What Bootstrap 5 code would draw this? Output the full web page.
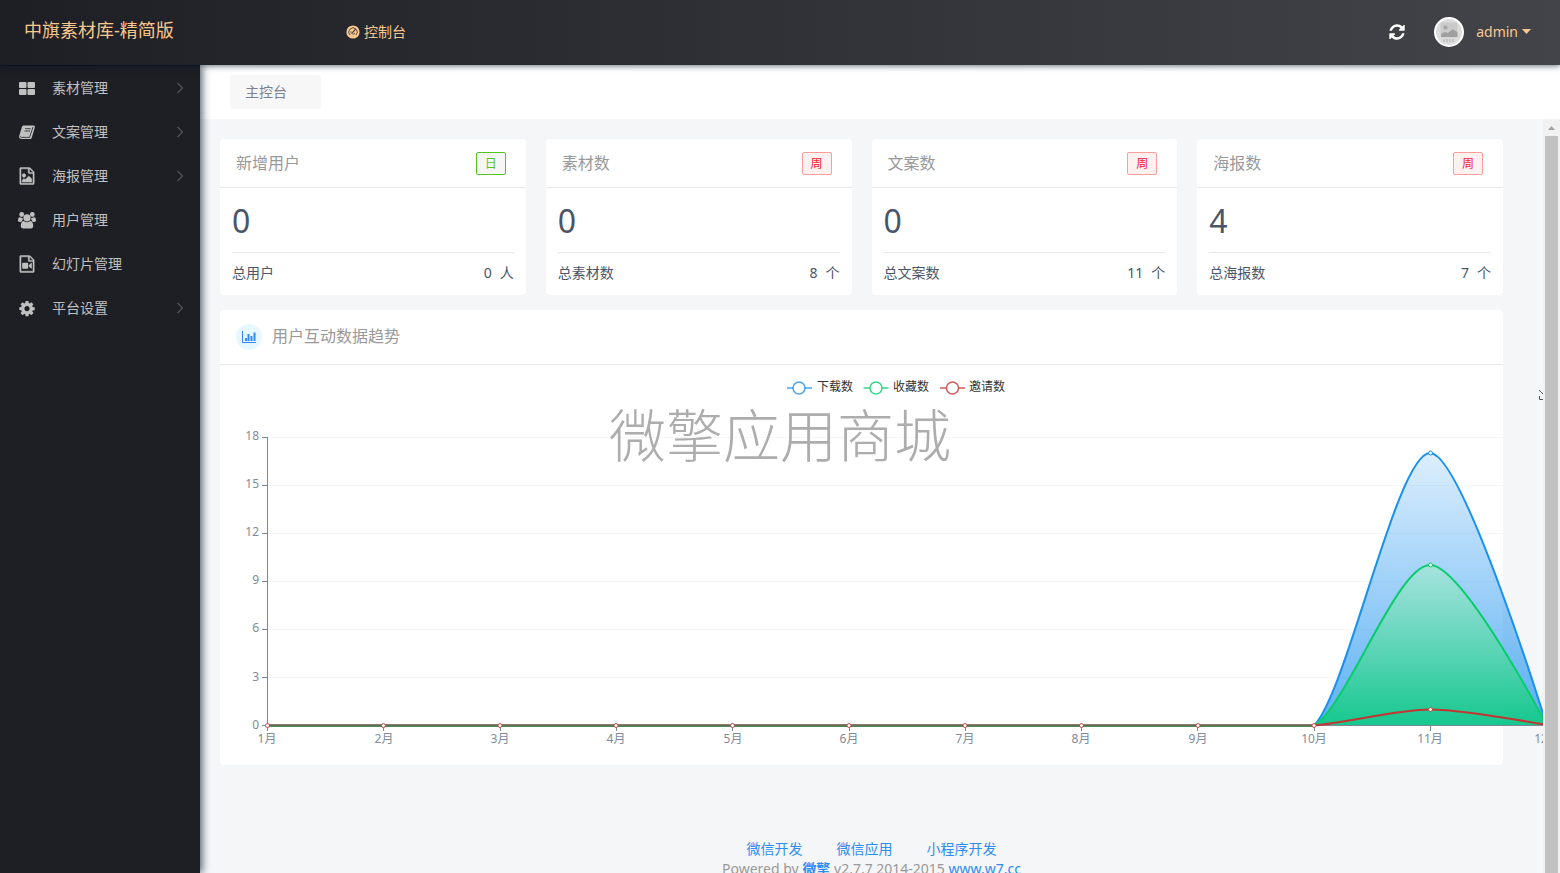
<!DOCTYPE html>
<html lang="zh-CN">
<head>
<meta charset="utf-8">
<meta name="viewport" content="width=device-width, initial-scale=1">
<title>中旗素材库-精简版</title>
<link href="https://cdn.jsdelivr.net/npm/bootstrap@5.3.0/dist/css/bootstrap.min.css" rel="stylesheet">
<style>
  body { font-family: "Noto Sans", "Noto Sans CJK SC", sans-serif; font-size: 14px; line-height: 20px; color: #4a5568; background: #f5f6f8; }
  a { text-decoration: none; }
  .topbar { height: 65px; padding: 0 25px 2px 24px; background: linear-gradient(90deg, #1e1f24, #43444a); box-shadow: 0 1px 6px rgba(0, 21, 41, .6); z-index: 3; }
  .topbar, .topbar a { color: #f8c88f; }
  .brand-link { font-size: 18px; width: 322px; padding: 0 0 4px; }
  .avatar { width: 30px; height: 30px; }
  .side { width: 200px; background: #1e1f24; border-top: 1px solid #10141c; box-shadow: 2px 0 8px rgba(0, 21, 41, .7); z-index: 2; }
  .side a { height: 44px; color: #c0c0c0; padding: 0 16px 0 18px; }
  .side .ico { width: 18px; height: 18px; fill: #c0c0c0; margin-right: 16px; }
  .chev { width: 8px; height: 12px; stroke: #77787c; fill: none; }
  .tabs { height: 54px; background: #fff; padding: 10px 30px; }
  .tabs a { width: 91px; height: 34px; padding: 0 15px; border-radius: 3px; background: #f7f7f7; color: #7b8095; }
  .content-pane { padding: 20px 40px 0 20px; }
  .panel-box { background: #fff; border-radius: 4px; }
  .stat-grid { gap: 20px; margin-bottom: 15px; }
  .box-title { font-size: 16px; font-weight: 400; color: #999; margin: 0; }
  .stat-head { height: 49px; padding: 1px 20px 0 16px; border-bottom: 1px solid #e8e8e8; }
  .tag { width: 30px; height: 23px; font-size: 12px; border: 1px solid #ff9d9a; border-radius: 2px; background: #fff1f0; color: #f5222d; }
  .tag-day { border-color: #52c41a; background: #f6f6f6; color: #52c41a; }
  .stat-body { padding: 0 12px 2px; }
  .stat-num { font-size: 32px; height: 65px; padding-top: 2px; border-bottom: 1px solid #e8e8e8; }
  .stat-foot { height: 40px; }
  .chart-head { height: 55px; padding: 0 16px; gap: 10px; border-bottom: 1px solid #e8e8e8; }
  .round-ico { width: 26px; height: 26px; border-radius: 50%; background: #e6f7ff; }
  .chart-wrap { padding-left: 15px; }
  .chart { display: block; width: calc(100% + 55px); height: auto; overflow: visible; font-size: 12px; }
  .foot { margin: 74px -20px 0 0; color: #999; }
  .foot a { color: #2d8cf0; }
  .foot-links { gap: 34px; }
  .scroll-track { width: 17px; background: #f1f1f1; padding: 0 2px; gap: 6px; }
  .scroll-track i { background: #c1c1c1; }
  .scroll-track svg { width: 7px; height: 4px; margin: 7px auto 0; }
  .watermark { font-size: 57px; line-height: 56px; padding-bottom: 4px; font-weight: 300; color: #adadad; z-index: 5; pointer-events: none; }
</style>
</head>
<body class="vh-100 overflow-hidden d-flex flex-column">

<header class="topbar d-flex align-items-center flex-shrink-0 position-relative">
  <a href="#" class="brand-link">中旗素材库-精简版</a>
  <a href="#" class="d-flex align-items-center gap-1">
    <svg width="14" height="14" viewBox="0 0 14 14"><circle cx="7" cy="7" r="6.6" fill="#f8c88f"/><path d="M4 10a4.2 4.2 0 1 1 6 0M4.800 6.300A2.600 2.600 0 0 0 9 8.500" fill="none" stroke="#4a3f38" stroke-width=".9"/><path d="M6.300 7.900 9.800 3.800" stroke="#4a3f38" stroke-width="1.100"/></svg>
    <span>控制台</span>
  </a>
  <button type="button" class="btn p-0 border-0 ms-auto me-4 d-flex" aria-label="刷新">
    <svg width="18" height="18" viewBox="0 0 1792 1792" fill="#fff"><path d="M1639 1056q0 5-1 7-64 268-268 434.500t-478 166.500q-146 0-282.500-55t-243.500-157l-129 129q-19 19-45 19t-45-19-19-45v-448q0-26 19-45t45-19h448q26 0 45 19t19 45-19 45l-137 137q71 66 161 102t187 36q134 0 250-65t186-179q11-17 53-117 8-23 30-23h192q13 0 22.500 9.500t9.500 22.500zm25-800v448q0 26-19 45t-45 19h-448q-26 0-45-19t-19-45 19-45l138-138q-148-137-349-137-134 0-250 65t-186 179q-11 17-53 117-8 23-30 23h-199q-13 0-22.500-9.500t-9.500-22.500v-7q65-268 270-434.500t480-166.500q146 0 284 55.500t245 156.500l130-129q19-19 45-19t45 19 19 45z"/></svg>
  </button>
  <a href="#" class="d-flex align-items-center ms-1">
    <svg class="avatar me-2" viewBox="0 0 30 30"><circle cx="15" cy="15" r="14" fill="#dcdcdc" stroke="#fff" stroke-width="2"/><rect x="6.500" y="5.500" width="17" height="15" rx="2" fill="#cacaca"/><circle cx="11.500" cy="10.500" r="2" fill="#a2a2a2"/><path d="M7 20v-3l4-2 3 1 5-4 4.500 3.500V20z" fill="#a0a0a0"/><path d="M9 23.500h12" stroke="#c4c4c4" stroke-width="3" stroke-dasharray="2 1"/></svg>
    <span class="ps-1 pe-1">admin</span>
    <svg width="9" height="5" viewBox="0 0 9 5" class="me-1"><path d="M0 0h9L4.500 5z" fill="#f8c88f"/></svg>
  </a>
</header>

<div class="d-flex flex-grow-1 overflow-hidden">
  <nav class="side flex-shrink-0 d-flex flex-column position-relative">
    <a href="#" class="d-flex align-items-center">
      <svg class="ico" viewBox="0 0 18 18"><rect x="1" y="3" width="7.500" height="6" rx="1"/><rect x="9.500" y="3" width="7.500" height="6" rx="1"/><rect x="1" y="10" width="7.500" height="6" rx="1"/><rect x="9.500" y="10" width="7.500" height="6" rx="1"/></svg>
      <span>素材管理</span><svg class="chev ms-auto" viewBox="0 0 8 12"><path d="M1.500 1 6.500 6 1.500 11"/></svg></a>
    <a href="#" class="d-flex align-items-center">
      <svg class="ico" viewBox="0 0 18 18"><path d="M6.200 2.500h9.300c1.200 0 1.600.9 1.300 1.900l-3 10c-.3 1-1 1.500-2 1.500H3.600c-1.600 0-3-1.200-2.500-2.700L4 3.800c.3-.8 1.200-1.300 2.200-1.300z"/><path d="M7.200 5.700h5.500M6.500 8H12M2.400 13.200c-.1.700.5 1.200 1.200 1.200h7.900L15 4" fill="none" stroke="#1e1f24" stroke-width=".8"/></svg>
      <span>文案管理</span><svg class="chev ms-auto" viewBox="0 0 8 12"><path d="M1.500 1 6.500 6 1.500 11"/></svg></a>
    <a href="#" class="d-flex align-items-center">
      <svg class="ico" viewBox="0 -64 1792 1920"><path d="M1596 380q28 28 48 76t20 88v1152q0 40-28 68t-68 28h-1344q-40 0-68-28t-28-68v-1600q0-40 28-68t68-28h896q40 0 88 20t76 48zm-444-244v376h376q-10-29-22-41l-313-313q-12-12-41-22zm384 1528v-1024h-416q-40 0-68-28t-28-68v-416h-768v1536h1280zm-128-448v320h-1024v-192l192-192 128 128 384-384zm-832-192q-80 0-136-56t-56-136 56-136 136-56 136 56 56 136-56 136-136 56z" stroke="#c0c0c0" stroke-width="50"/></svg>
      <span>海报管理</span><svg class="chev ms-auto" viewBox="0 0 8 12"><path d="M1.500 1 6.500 6 1.500 11"/></svg></a>
    <a href="#" class="d-flex align-items-center">
      <svg class="ico" viewBox="0 0 18 18"><circle cx="3.700" cy="3.500" r="2.400"/><circle cx="14.300" cy="3.500" r="2.400"/><path d="M5 7.500c-1.500-.6-2.500-1.300-3.500-1.300C.5 6.200 0 8 0 9.600c0 .9.700 1.400 1.600 1.400h1.800c.4-1.300 1-2.400 2-3zM13 7.500c1.500-.6 2.500-1.300 3.500-1.300 1 0 1.500 1.800 1.500 3.400 0 .9-.7 1.400-1.600 1.400h-1.800c-.4-1.300-1-2.400-2-3z"/><path d="M5.800 10c-2 0-3 2-3 5 0 1.500 1 2.400 2.300 2.400h7.800c1.300 0 2.300-.9 2.300-2.400 0-3-1-5-3-5-1 .8-2 1.200-3.200 1.200S6.800 10.800 5.800 10z"/><circle cx="9" cy="6.800" r="3.600"/></svg>
      <span>用户管理</span></a>
    <a href="#" class="d-flex align-items-center">
      <svg class="ico" viewBox="0 -64 1792 1920"><g stroke="#c0c0c0" stroke-width="50"><path d="M1596 380q28 28 48 76t20 88v1152q0 40-28 68t-68 28h-1344q-40 0-68-28t-28-68v-1600q0-40 28-68t68-28h896q40 0 88 20t76 48zm-444-244v376h376q-10-29-22-41l-313-313q-12-12-41-22zm384 1528v-1024h-416q-40 0-68-28t-28-68v-416h-768v1536h1280z"/></g><rect x="384" y="768" width="640" height="640" rx="110"/><path d="M1060 1060 1330 800q78-20 78 50v476q0 70-78 50L1060 1116z"/></svg>
      <span>幻灯片管理</span></a>
    <a href="#" class="d-flex align-items-center">
      <svg class="ico" viewBox="0 -64 1792 1792"><path d="M1152 896q0-106-75-181t-181-75-181 75-75 181 75 181 181 75 181-75 75-181zm512-109v222q0 12-8 23t-20 13l-185 28q-19 54-39 91 35 50 107 138 10 12 10 25t-9 23q-27 37-99 108t-94 71q-12 0-26-9l-138-108q-44 23-91 38-16 136-29 186-7 28-36 28h-222q-14 0-24.500-8.500t-11.500-21.500l-28-184q-49-16-90-37l-141 107q-10 9-25 9-14 0-25-11-126-114-165-168-7-10-7-23 0-12 8-23 15-21 51-66.500t54-70.500q-27-50-41-99l-183-27q-13-2-21-12.500t-8-23.500v-222q0-12 8-23t19-13l186-28q14-46 39-92-40-57-107-138-10-12-10-24 0-10 9-23 26-36 98.500-107.500t94.500-71.500q13 0 26 10l138 107q44-23 91-38 16-136 29-186 7-28 36-28h222q14 0 24.500 8.500t11.500 21.500l28 184q49 16 90 37l142-107q9-9 24-9 13 0 25 10 129 119 165 170 7 8 7 22 0 12-8 23-15 21-51 66.500t-54 70.500q26 50 41 98l183 28q13 2 21 12.500t8 23.500z"/></svg>
      <span>平台设置</span><svg class="chev ms-auto" viewBox="0 0 8 12"><path d="M1.500 1 6.500 6 1.500 11"/></svg></a>
  </nav>

  <div class="flex-grow-1 d-flex flex-column overflow-hidden">
    <div class="tabs flex-shrink-0"><a href="#" class="d-flex align-items-center">主控台</a></div>

    <div class="d-flex flex-grow-1 overflow-hidden">
      <main class="content-pane flex-grow-1 overflow-hidden">
        <div class="stat-grid d-flex">
          <section class="panel-box flex-fill w-25">
            <div class="stat-head d-flex align-items-center justify-content-between"><h2 class="box-title">新增用户</h2><span class="tag tag-day d-flex align-items-center justify-content-center">日</span></div>
            <div class="stat-body"><div class="stat-num d-flex align-items-center">0</div><div class="stat-foot d-flex align-items-center"><span class="me-auto">总用户</span><span class="me-2">0</span><span>人</span></div></div>
          </section>
          <section class="panel-box flex-fill w-25">
            <div class="stat-head d-flex align-items-center justify-content-between"><h2 class="box-title">素材数</h2><span class="tag d-flex align-items-center justify-content-center">周</span></div>
            <div class="stat-body"><div class="stat-num d-flex align-items-center">0</div><div class="stat-foot d-flex align-items-center"><span class="me-auto">总素材数</span><span class="me-2">8</span><span>个</span></div></div>
          </section>
          <section class="panel-box flex-fill w-25">
            <div class="stat-head d-flex align-items-center justify-content-between"><h2 class="box-title">文案数</h2><span class="tag d-flex align-items-center justify-content-center">周</span></div>
            <div class="stat-body"><div class="stat-num d-flex align-items-center">0</div><div class="stat-foot d-flex align-items-center"><span class="me-auto">总文案数</span><span class="me-2">11</span><span>个</span></div></div>
          </section>
          <section class="panel-box flex-fill w-25">
            <div class="stat-head d-flex align-items-center justify-content-between"><h2 class="box-title">海报数</h2><span class="tag d-flex align-items-center justify-content-center">周</span></div>
            <div class="stat-body"><div class="stat-num d-flex align-items-center">4</div><div class="stat-foot d-flex align-items-center"><span class="me-auto">总海报数</span><span class="me-2">7</span><span>个</span></div></div>
          </section>
        </div>

        <section class="panel-box">
          <div class="chart-head d-flex align-items-center">
            <span class="round-ico d-flex align-items-center justify-content-center"><svg width="14" height="12" viewBox="0 0 14 12"><path d="M.5 0v11.500H14" fill="none" stroke="#2f8cff"/><path d="M4 10V7M6.500 10V3M9.500 10V5M12.500 10V1.500" stroke="#2f8cff" stroke-width="2"/></svg></span>
            <h2 class="box-title">用户互动数据趋势</h2>
          </div>
          <div class="chart-wrap">
            <svg class="chart" viewBox="0 0 1323 400" role="img" aria-label="用户互动数据趋势">
              <defs>
                <linearGradient id="gBlue" x1="0" y1="0" x2="0" y2="1"><stop offset="0" stop-color="#1890ef" stop-opacity=".15"/><stop offset="1" stop-color="#1890ef" stop-opacity=".7"/></linearGradient>
                <linearGradient id="gGreen" x1="0" y1="0" x2="0" y2="1"><stop offset="0" stop-color="#a6e6d8" stop-opacity=".8"/><stop offset="1" stop-color="#0ccb80" stop-opacity=".88"/></linearGradient>
              </defs>
              <g fill="#333">
                <g fill="#fff" stroke-width="1.500">
                  <path d="M552 23h25" stroke="#1890ef" opacity=".8"/><circle cx="564" cy="23" r="6" stroke="#1890ef" stroke-opacity=".8"/>
                  <path d="M628.500 23h25" stroke="#07cc6b" opacity=".8"/><circle cx="641" cy="23" r="6" stroke="#07cc6b" stroke-opacity=".8"/>
                  <path d="M705 23h25" stroke="#c23531" opacity=".8"/><circle cx="717.500" cy="23" r="6" stroke="#c23531" stroke-opacity=".8"/>
                </g>
                <text x="582" y="26">下载数</text><text x="658" y="26">收藏数</text><text x="734" y="26">邀请数</text>
              </g>
              <g fill="none" stroke="#555"><path d="M1304 25l7 7M1304.500 31v3.500h7v-5"/></g>
              <path d="M32 72.500H1312M32 120.500H1312M32 168.500H1312M32 216.500H1312M32 264.500H1312M32 312.500H1312" stroke="#f5f6f8" fill="none"/>
              <path d="M32.500 72V361M27 72.500h5M27 120.500h5M27 168.500h5M27 216.500h5M27 264.500h5M27 312.500h5M27 360.500H1312M32.500 361v5M148.500 361v5M265.500 361v5M381.500 361v5M497.500 361v5M614.500 361v5M730.500 361v5M846.500 361v5M962.500 361v5M1079.500 361v5M1195.500 361v5" stroke="#808695" fill="none"/>
              <g fill="#808a9d" text-anchor="end">
                <text x="24" y="75">18</text><text x="24" y="123">15</text><text x="24" y="171">12</text><text x="24" y="219">9</text><text x="24" y="267">6</text><text x="24" y="316">3</text><text x="24" y="364">0</text>
              </g>
              <g fill="#808a9d" text-anchor="middle">
                <text x="32" y="378">1月</text><text x="149" y="378">2月</text><text x="265" y="378">3月</text><text x="381" y="378">4月</text><text x="498" y="378">5月</text><text x="614" y="378">6月</text><text x="730" y="378">7月</text><text x="846" y="378">8月</text><text x="963" y="378">9月</text><text x="1079" y="378">10月</text><text x="1195" y="378">11月</text><text x="1312" y="378">12月</text>
              </g>
              <path d="M1079 360C1112 328 1162 88 1195 88S1311.500 360 1311.500 360z" fill="url(#gBlue)"/>
              <path d="M32 360.500H1079C1112 328 1162 88 1195 88S1311.500 360 1311.500 360" fill="none" stroke="#1890ef" stroke-width="2"/>
              <path d="M1079 360C1112 341 1162 200 1195 200S1311.500 360 1311.500 360z" fill="url(#gGreen)"/>
              <path d="M32 360.500H1079C1112 341 1162 200 1195 200S1311.500 360 1311.500 360" fill="none" stroke="#07cc6b" stroke-width="2"/>
              <path d="M32 360.500H1079C1112 358 1162 344.500 1195 344.500S1311.500 360 1311.500 360" fill="none" stroke="#c23531" stroke-width="2"/>
              <path d="M32 361H1079" stroke="#3f8a52" stroke-width="2" stroke-opacity=".7"/>
              <g fill="#fff">
                <g stroke="#c23531" stroke-opacity=".85"><circle cx="32.500" cy="360.500" r="2"/><circle cx="148.500" cy="360.500" r="2"/><circle cx="265" cy="360.500" r="2"/><circle cx="381" cy="360.500" r="2"/><circle cx="497.500" cy="360.500" r="2"/><circle cx="614" cy="360.500" r="2"/><circle cx="730" cy="360.500" r="2"/><circle cx="846.500" cy="360.500" r="2"/><circle cx="963" cy="360.500" r="2"/><circle cx="1079" cy="360.500" r="2"/><circle cx="1195.500" cy="344.500" r="2"/></g>
                <circle cx="1195.500" cy="200" r="2" stroke="#07cc6b"/><circle cx="1195.500" cy="88" r="2" stroke="#1890ef"/>
              </g>
            </svg>
          </div>
        </section>

        <footer class="foot text-center">
          <div class="foot-links d-flex justify-content-center"><a href="#">微信开发</a><a href="#">微信应用</a><a href="#">小程序开发</a></div>
          <div>Powered by <a href="#" class="fw-bold">微擎</a> v2.7.7 2014-2015 <a href="#">www.w7.cc</a></div>
        </footer>
      </main>
      <div class="scroll-track flex-shrink-0 d-flex flex-column" aria-hidden="true"><svg viewBox="0 0 7 4"><path d="M0 4h7L3.500 0z" fill="#a3a3a3"/></svg><i class="flex-grow-1"></i></div>
    </div>
  </div>
</div>

<div class="watermark position-absolute top-50 start-50 translate-middle text-nowrap">微擎应用商城</div>

<script src="https://cdn.jsdelivr.net/npm/bootstrap@5.3.0/dist/js/bootstrap.bundle.min.js"></script>
</body>
</html>
